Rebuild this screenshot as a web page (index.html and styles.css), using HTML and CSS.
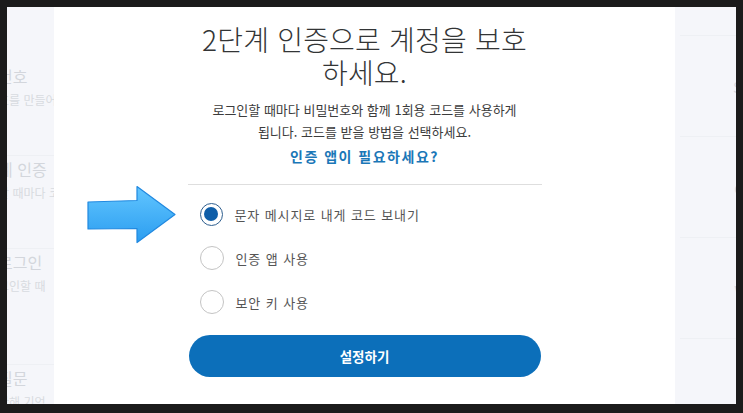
FILE: index.html
```html
<!DOCTYPE html>
<html lang="ko">
<head>
    <meta charset="UTF-8" />
    <meta name="viewport" content="width=device-width, initial-scale=1" />
    <title>2단계 인증</title>
    <link rel="stylesheet" href="styles.css">
</head>
<body>
    <div class="screen">
        <aside class="side side-left">
            <div class="side-item">
                <p class="side-title">번호</p>
                <p class="side-sub">호를 만들어 보세요</p>
            </div>
            <div class="side-item">
                <p class="side-title">계 인증</p>
                <p class="side-sub">할 때마다 코드</p>
            </div>
            <div class="side-item tall">
                <p class="side-title">로그인</p>
                <p class="side-sub">그인할 때</p>
            </div>
            <div class="side-item last">
                <p class="side-title">질문</p>
                <p class="side-sub">안해 기억</p>
            </div>
        </aside>

        <main class="modal">
            <svg class="arrow" width="90" height="60" viewBox="0 0 90 60">
                <defs>
                    <linearGradient id="arrowFill" x1="0" y1="0" x2="0" y2="1">
                        <stop offset="0" stop-color="#62c6ff" />
                        <stop offset="1" stop-color="#2b9df0" />
                    </linearGradient>
                </defs>
                <path d="M1 17 L50 15.5 L50 1.5 L88 29.5 L50 57.5 L50 43.5 L1 44 Z"
                      fill="url(#arrowFill)" stroke="#2189e0" stroke-width="1.2" stroke-linejoin="round" />
            </svg>

            <div class="content">
                <h1>2단계 인증으로 계정을 보호<br>하세요.</h1>
                <p class="lead">로그인할 때마다 비밀번호와 함께 1회용 코드를 사용하게<br>됩니다. 코드를 받을 방법을 선택하세요.</p>
                <a class="help" href="#">인증 앱이 필요하세요?</a>

                <div class="options">
                    <label class="option">
                        <input type="radio" name="method" checked>
                        <span class="dot"></span>
                        <span>문자 메시지로 내게 코드 보내기</span>
                    </label>
                    <label class="option">
                        <input type="radio" name="method">
                        <span class="dot"></span>
                        <span>인증 앱 사용</span>
                    </label>
                    <label class="option">
                        <input type="radio" name="method">
                        <span class="dot"></span>
                        <span>보안 키 사용</span>
                    </label>
                </div>

                <button class="submit">설정하기</button>
            </div>
        </main>

        <aside class="side side-right">
            <div class="card"><span class="peek">S</span></div>
            <div class="card"><span class="peek">c</span></div>
            <div class="card"><span class="peek">v</span></div>
            <div class="card"></div>
        </aside>
    </div>
</body>
</html>
```

FILE: styles.css
```css
html, body { margin: 0; padding: 0; }
body { background: #1b1b1b; font-family: "Noto Sans CJK KR", "Noto Sans", sans-serif; }

.screen { margin: 7px 7px 9px 7px; height: 397px; display: grid; grid-template-columns: 47px 621px 61px; overflow: hidden; }

/* faded page behind the dialog */
.side { background: #f5f6fa; overflow: hidden; }
.side-left { padding-top: 56px; }
.side-item { margin-left: -9px; white-space: nowrap; height: 93px; border-bottom: 1px solid #eef0f4; box-sizing: border-box; }
.side-item.tall { height: 116px; }
.side-item.last { border-bottom: none; }
.side-title { margin: 0; font-size: 16px; line-height: 26px; color: #d3d6dc; }
.side-sub { margin: 2px 0 0; font-size: 12px; line-height: 18px; color: #d8dbe0; }

.side-right { padding: 0 0 0 5px; }
.card { height: 100px; border-bottom: 1px solid #eef0f4; display: flex; align-items: center; justify-content: flex-end; }
.card:first-child { border-top: 1px solid #eef0f4; margin-top: 28px; }
.peek { font-size: 15px; color: #d6d9df; margin-right: -6px; }

/* dialog */
.modal { background: #fff; position: relative; padding-top: 16px; }
.arrow { position: absolute; left: 33px; top: 178px; }
.content { width: 354px; margin: 0 auto; text-align: center; }

h1 { margin: 0; font-size: 28px; line-height: 33px; font-weight: 300; color: #333536; letter-spacing: 0.2px; }
.lead { margin: 10px 0 0; font-size: 13px; line-height: 22px; color: #3c3c3c; }
.help { display: block; margin-top: 2px; font-size: 14px; line-height: 22px; font-weight: 700; color: #1b77b7; letter-spacing: 1.5px; text-decoration: none; }

.options { margin-top: 17px; border-top: 1px solid #dedede; padding-top: 7px; text-align: left; }
.option { display: flex; align-items: center; gap: 12px; height: 44px; padding-left: 12px; font-size: 13px; color: #555; letter-spacing: 0.9px; cursor: pointer; }
.option input { display: none; }
.dot { width: 22px; height: 22px; border-radius: 50%; border: 1px solid #c4c4c4; position: relative; }
.option input:checked + .dot { border: 1.5px solid #2f5f8f; width: 21px; height: 21px; }
.option input:checked + .dot::after { content: ""; position: absolute; left: 3.5px; top: 3.5px; width: 14px; height: 14px; border-radius: 50%; background: #0f5ea8; }

.submit { display: block; width: 352px; height: 42px; margin: 11px auto 0; border: none; border-radius: 21px; background: #0c6fba; color: #fff; font-family: inherit; font-size: 13.5px; font-weight: 700; cursor: pointer; }
.submit:hover { background: #0a5f9f; }
```
